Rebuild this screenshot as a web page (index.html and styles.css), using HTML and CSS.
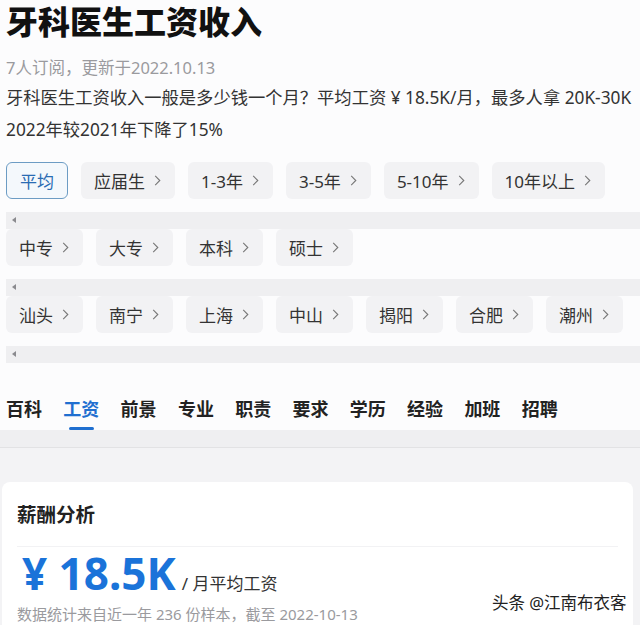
FILE: index.html
```html
<!DOCTYPE html>
<html lang="zh-CN">
<head>
    <meta charset="UTF-8">
    <meta name="viewport" content="width=device-width, initial-scale=1.0">
    <title>牙科医生工资收入</title>
    <link rel="stylesheet" href="styles.css">
</head>
<body>
    <div class="page">
        <header class="intro">
            <h1 class="title">牙科医生工资收入</h1>
            <p class="meta">7人订阅，更新于2022.10.13</p>
            <p class="desc">牙科医生工资收入一般是多少钱一个月？平均工资 ¥ 18.5K/月，最多人拿 20K-30K<br>2022年较2021年下降了15%</p>
        </header>

        <!-- 经验 -->
        <div class="filter">
            <div class="chips">
                <span class="chip active">平均</span>
                <span class="chip">应届生<svg class="chev" viewBox="0 0 7 12"><polyline points="1,1 6,6 1,11"/></svg></span>
                <span class="chip">1-3年<svg class="chev" viewBox="0 0 7 12"><polyline points="1,1 6,6 1,11"/></svg></span>
                <span class="chip">3-5年<svg class="chev" viewBox="0 0 7 12"><polyline points="1,1 6,6 1,11"/></svg></span>
                <span class="chip">5-10年<svg class="chev" viewBox="0 0 7 12"><polyline points="1,1 6,6 1,11"/></svg></span>
                <span class="chip">10年以上<svg class="chev" viewBox="0 0 7 12"><polyline points="1,1 6,6 1,11"/></svg></span>
            </div>
            <div class="scrollbar"><span class="arrow"></span></div>
        </div>

        <!-- 学历 -->
        <div class="filter">
            <div class="chips">
                <span class="chip">中专<svg class="chev" viewBox="0 0 7 12"><polyline points="1,1 6,6 1,11"/></svg></span>
                <span class="chip">大专<svg class="chev" viewBox="0 0 7 12"><polyline points="1,1 6,6 1,11"/></svg></span>
                <span class="chip">本科<svg class="chev" viewBox="0 0 7 12"><polyline points="1,1 6,6 1,11"/></svg></span>
                <span class="chip">硕士<svg class="chev" viewBox="0 0 7 12"><polyline points="1,1 6,6 1,11"/></svg></span>
            </div>
            <div class="scrollbar"><span class="arrow"></span></div>
        </div>

        <!-- 城市 -->
        <div class="filter">
            <div class="chips">
                <span class="chip">汕头<svg class="chev" viewBox="0 0 7 12"><polyline points="1,1 6,6 1,11"/></svg></span>
                <span class="chip">南宁<svg class="chev" viewBox="0 0 7 12"><polyline points="1,1 6,6 1,11"/></svg></span>
                <span class="chip">上海<svg class="chev" viewBox="0 0 7 12"><polyline points="1,1 6,6 1,11"/></svg></span>
                <span class="chip">中山<svg class="chev" viewBox="0 0 7 12"><polyline points="1,1 6,6 1,11"/></svg></span>
                <span class="chip">揭阳<svg class="chev" viewBox="0 0 7 12"><polyline points="1,1 6,6 1,11"/></svg></span>
                <span class="chip">合肥<svg class="chev" viewBox="0 0 7 12"><polyline points="1,1 6,6 1,11"/></svg></span>
                <span class="chip">潮州<svg class="chev" viewBox="0 0 7 12"><polyline points="1,1 6,6 1,11"/></svg></span>
            </div>
            <div class="scrollbar"><span class="arrow"></span></div>
        </div>

        <nav class="tabs">
            <span class="tab">百科</span>
            <span class="tab active">工资</span>
            <span class="tab">前景</span>
            <span class="tab">专业</span>
            <span class="tab">职责</span>
            <span class="tab">要求</span>
            <span class="tab">学历</span>
            <span class="tab">经验</span>
            <span class="tab">加班</span>
            <span class="tab">招聘</span>
        </nav>

        <div class="band"></div>

        <div class="card-wrap">
            <section class="card">
                <h2 class="card-title">薪酬分析</h2>
                <div class="salary">
                    <span class="amount">¥ 18.5K</span>
                    <span class="unit">/ 月平均工资</span>
                </div>
                <p class="source">数据统计来自近一年 236 份样本，截至 2022-10-13</p>
            </section>
        </div>

        <div class="watermark">头条 @江南布衣客</div>
    </div>
</body>
</html>
```

FILE: styles.css
```css
* {
    box-sizing: border-box;
}

body {
    margin: 0;
    padding: 0;
    font-family: "Noto Sans", "Noto Sans CJK SC", sans-serif;
    background-color: #fcfcfd;
    color: #222;
}

.page {
    position: relative;
    width: 640px;
    height: 625px;
    overflow: hidden;
}

.intro {
    padding-left: 6px;
}

.title {
    margin: 0 0 10px;
    font-size: 32px;
    line-height: 44px;
    font-weight: 900;
    color: #111;
}

.meta {
    margin: 0;
    font-size: 16.5px;
    line-height: 28px;
    color: #9a9a9e;
}

.desc {
    margin: 0;
    font-size: 17.3px;
    line-height: 32px;
    color: #333;
    white-space: nowrap;
}

.filter {
    margin-left: 6px;
}

.filter:first-of-type {
    margin-top: 16px;
}

.chips {
    display: flex;
    gap: 13px;
    white-space: nowrap;
    overflow: hidden;
}

.chip {
    display: flex;
    align-items: center;
    flex-shrink: 0;
    height: 37px;
    padding: 0 14px 0 13px;
    font-size: 17px;
    color: #333;
    background-color: #f2f2f4;
    border-radius: 6px;
}

.chip.active {
    padding: 0 13px;
    color: #2a6cb3;
    background-color: #f4f8fc;
    border: 1px solid #6c9cc4;
}

.chev {
    width: 7px;
    height: 11px;
    margin-left: 9px;
    fill: none;
    stroke: #777;
    stroke-width: 1.2;
}

.scrollbar {
    position: relative;
    height: 17px;
    margin-top: 13px;
    background-color: #efeff1;
}

.scrollbar .arrow {
    position: absolute;
    left: 6px;
    top: 5px;
    width: 0;
    height: 0;
    border-top: 3.5px solid transparent;
    border-bottom: 3.5px solid transparent;
    border-right: 4px solid #8a8a8e;
}

.tabs {
    display: flex;
    gap: 21.3px;
    margin-top: 34px;
    padding-left: 6px;
}

.tab {
    position: relative;
    padding-bottom: 9px;
    font-size: 18px;
    line-height: 24px;
    font-weight: 600;
    color: #222;
}

.tab.active {
    color: #1f6fd0;
}

.tab.active::after {
    content: "";
    position: absolute;
    left: 6px;
    right: 5px;
    bottom: 0;
    height: 3px;
    border-radius: 2px;
    background-color: #1f6fd0;
}

.band {
    height: 52px;
    background: linear-gradient(#efeff1 0, #efeff1 17px, #e2e2e4 17px, #e2e2e4 18px, #f3f3f5 18px);
}

.card-wrap {
    padding: 0 7px 0 2px;
    background-color: #f3f3f5;
}

.card {
    padding: 0 15px 20px;
    background-color: #ffffff;
    border-radius: 8px 8px 0 0;
}

.card-title {
    margin: 0;
    padding: 19px 0 17px;
    font-size: 19.5px;
    line-height: 28px;
    font-weight: 700;
    color: #222;
    border-bottom: 1px solid #f2f2f4;
}

.salary {
    display: flex;
    align-items: baseline;
    padding-top: 2px;
    padding-left: 5px;
}

.amount {
    font-size: 44px;
    line-height: 48px;
    font-weight: 700;
    color: #1a73d9;
}

.unit {
    margin-left: 6px;
    font-size: 17px;
    color: #333;
}

.source {
    margin: 6px 0 0;
    font-size: 15px;
    line-height: 22px;
    color: #9a9a9e;
}

.watermark {
    position: absolute;
    left: 492px;
    top: 591px;
    font-size: 16.5px;
    line-height: 24px;
    color: #222;
    text-shadow: 0 0 2px #fff, 0 0 2px #fff;
}
```
